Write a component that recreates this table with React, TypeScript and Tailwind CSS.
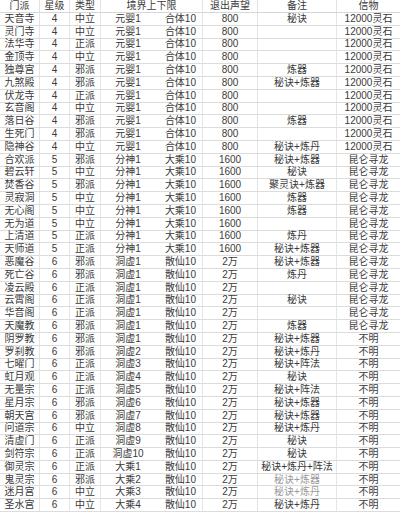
type Row = [string, string, string, string, string, string, string, string];

const rows: Row[] = [
  ['天音寺', '4', '中立', '元婴1', '合体10', '800', '秘诀', '12000灵石'],
  ['灵门寺', '4', '中立', '元婴1', '合体10', '800', '', '12000灵石'],
  ['法华寺', '4', '正派', '元婴1', '合体10', '800', '', '12000灵石'],
  ['金顶寺', '4', '中立', '元婴1', '合体10', '800', '', '12000灵石'],
  ['独尊宫', '4', '邪派', '元婴1', '合体10', '800', '炼器', '12000灵石'],
  ['九煞殿', '4', '邪派', '元婴1', '合体10', '800', '秘诀+炼器', '12000灵石'],
  ['伏龙寺', '4', '正派', '元婴1', '合体10', '800', '', '12000灵石'],
  ['玄音阁', '4', '中立', '元婴1', '合体10', '800', '', '12000灵石'],
  ['落日谷', '4', '邪派', '元婴1', '合体10', '800', '炼器', '12000灵石'],
  ['生死门', '4', '邪派', '元婴1', '合体10', '800', '', '12000灵石'],
  ['隐神谷', '4', '中立', '元婴1', '合体10', '800', '秘诀+炼丹', '12000灵石'],
  ['合欢派', '5', '邪派', '分神1', '大乘10', '1600', '秘诀+炼器', '昆仑寻龙'],
  ['碧云轩', '5', '中立', '分神1', '大乘10', '1600', '秘诀', '昆仑寻龙'],
  ['焚香谷', '5', '邪派', '分神1', '大乘10', '1600', '聚灵诀+炼器', '昆仑寻龙'],
  ['灵寂洞', '5', '中立', '分神1', '大乘10', '1600', '炼器', '昆仑寻龙'],
  ['无心阁', '5', '中立', '分神1', '大乘10', '1600', '炼器', '昆仑寻龙'],
  ['无为道', '5', '中立', '分神1', '大乘10', '1600', '', '昆仑寻龙'],
  ['上清道', '5', '正派', '分神1', '大乘10', '1600', '炼丹', '昆仑寻龙'],
  ['天师道', '5', '正派', '分神1', '大乘10', '1600', '秘诀+炼器', '昆仑寻龙'],
  ['恶魔谷', '6', '邪派', '洞虚1', '散仙10', '2万', '秘诀+炼器', '昆仑寻龙'],
  ['死亡谷', '6', '邪派', '洞虚1', '散仙10', '2万', '炼丹', '昆仑寻龙'],
  ['凌云殿', '6', '正派', '洞虚1', '散仙10', '2万', '', '昆仑寻龙'],
  ['云霄阁', '6', '正派', '洞虚1', '散仙10', '2万', '秘诀', '昆仑寻龙'],
  ['华音阁', '6', '正派', '洞虚1', '散仙10', '2万', '', '昆仑寻龙'],
  ['天魔教', '6', '邪派', '洞虚1', '散仙10', '2万', '炼器', '昆仑寻龙'],
  ['阴罗教', '6', '邪派', '洞虚1', '散仙10', '2万', '秘诀+炼器', '不明'],
  ['罗刹教', '6', '邪派', '洞虚2', '散仙10', '2万', '秘诀+炼丹', '不明'],
  ['七曜门', '6', '正派', '洞虚3', '散仙10', '2万', '秘诀+阵法', '不明'],
  ['虹月观', '6', '正派', '洞虚4', '散仙10', '2万', '秘诀', '不明'],
  ['无量宗', '6', '正派', '洞虚5', '散仙10', '2万', '秘诀+阵法', '不明'],
  ['星月宗', '6', '邪派', '洞虚6', '散仙10', '2万', '秘诀+炼器', '不明'],
  ['朝天宫', '6', '邪派', '洞虚7', '散仙10', '2万', '秘诀+炼器', '不明'],
  ['问道宗', '6', '中立', '洞虚8', '散仙10', '2万', '秘诀+炼丹', '不明'],
  ['清虚门', '6', '正派', '洞虚9', '散仙10', '2万', '秘诀', '不明'],
  ['剑符宗', '6', '正派', '洞虚10', '散仙10', '2万', '秘诀', '不明'],
  ['御灵宗', '6', '正派', '大乘1', '散仙10', '2万', '秘诀+炼丹+阵法', '不明'],
  ['鬼灵宗', '6', '邪派', '大乘2', '散仙10', '2万', '秘诀+炼器', '不明'],
  ['迷月宫', '6', '中立', '大乘3', '散仙10', '2万', '秘诀+炼丹', '不明'],
  ['圣水宫', '6', '中立', '大乘4', '散仙10', '2万', '秘诀+炼丹', '不明']
];

// column widths, left to right (sum 400)
const cols = [
  'w-[40px] justify-center border-r',
  'w-[30px] justify-center border-r',
  'w-[31px] justify-center border-r',
  'w-[52px] justify-center pl-[2px]',
  'w-[50px] justify-end pr-[6px] border-r',
  'w-[55px] justify-center border-r',
  'w-[79px] justify-center border-r',
  'w-[63px] justify-center'
];

const head = [
  ['门派', 'w-[40px] border-r'],
  ['星级', 'w-[30px] border-r'],
  ['类型', 'w-[31px] border-r'],
  ['境界上下限', 'w-[102px] border-r'],
  ['退出声望', 'w-[55px] border-r'],
  ['备注', 'w-[79px] border-r'],
  ['信物', 'w-[63px]']
];

export default function App() {
  return (
    <div
      className="w-[400px] h-[513px] overflow-hidden bg-white text-[10px] leading-none text-[#3a3a3a]"
      style={{ fontFamily: '"Liberation Sans", "Noto Sans CJK SC", sans-serif' }}
    >
      {/* header */}
      <div className="flex h-[13px] border-b border-[#d6d6d6]">
        {head.map(([label, cls]) => (
          <div key={label} className={`${cls} flex-none flex items-center justify-center border-[#e2e2e2]`}>
            {label}
          </div>
        ))}
      </div>

      {rows.map((row, i) => (
        <div key={i} className="flex h-[12.8px] border-b border-[#dcdcdc]">
          {row.map((cell, j) => (
            <div
              key={j}
              className={`${cols[j]} flex-none flex items-center whitespace-nowrap border-[#e4e4e4]`}
            >
              <span className={j === 6 && (i === 36 || i === 37) ? 'text-[#9a9a9a]' : ''}>{cell}</span>
            </div>
          ))}
        </div>
      ))}
    </div>
  );
}
